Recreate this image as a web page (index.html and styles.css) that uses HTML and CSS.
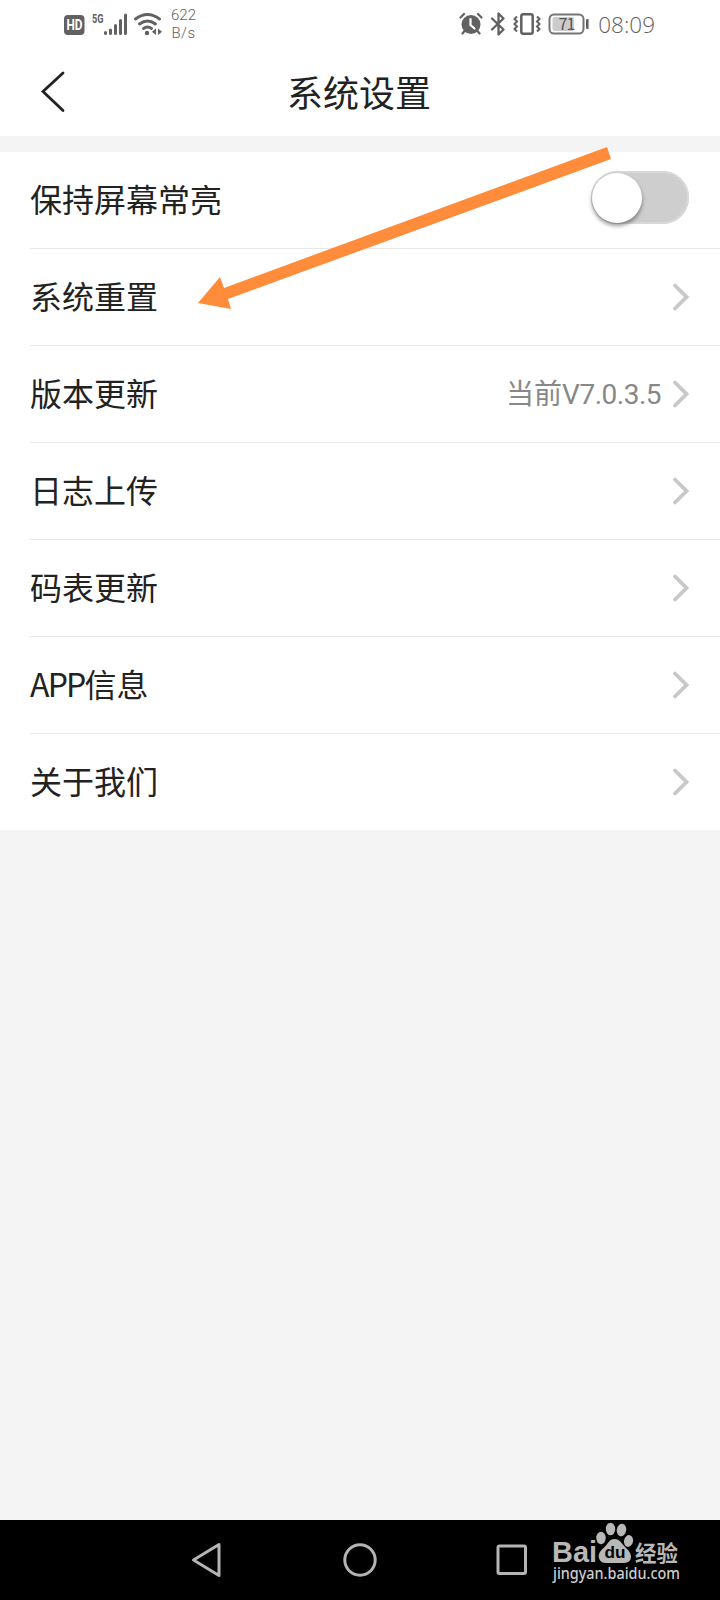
FILE: index.html
```
<!DOCTYPE html>
<html lang="zh-CN">
<head>
    <meta charset="UTF-8">
    <meta name="viewport" content="width=device-width, initial-scale=1.0">
    <title>系统设置</title>
    <link rel="stylesheet" href="styles.css">
</head>
<body>

<!-- Status bar -->
<div class="status-bar">
    <div class="status-left">
        <svg class="status-network" width="100" height="26" viewBox="0 0 100 26">
            <rect x="0" y="4" width="20.5" height="20" rx="4" fill="#616161"/>
            <text class="hd" x="2.5" y="19" textLength="16" lengthAdjust="spacingAndGlyphs">HD</text>
            <text class="net" x="28" y="11.5" textLength="11.5" lengthAdjust="spacingAndGlyphs">5G</text>
            <path d="M41.500 21.500V22.500M46.500 19V22.500M51.500 14.500V22.500M56.500 9.500V22.500M61.500 4V22.500" stroke="#616161" stroke-width="3" stroke-linecap="round"/>
            <g fill="none" stroke="#616161" stroke-width="2.900" stroke-linecap="round">
                <path d="M71.500 8Q83.500 -1 95.500 8"/>
                <path d="M75.500 13Q83.500 7 91.500 13"/>
                <path d="M79.500 17.500Q83.500 14.500 87.500 17.500"/>
            </g>
            <circle cx="83" cy="22" r="2.200" fill="#616161"/>
            <path d="M92 17.500V24L88 20.800ZM94 17.500V24L98 20.800Z" fill="#616161"/>
        </svg>
        <div class="speed">
            <span>622</span>
            <span class="unit">B/s</span>
        </div>
    </div>
    <div class="status-right">
        <!-- alarm -->
        <svg width="24" height="24" viewBox="0 0 24 24">
            <circle cx="12" cy="12.500" r="9.500" fill="#616161"/>
            <path d="M1.500 5.500L5 2M19 2L22.500 5.500M5.500 19L3.500 21.500M18.500 19L20.500 21.500" stroke="#616161" stroke-width="2.200" stroke-linecap="round"/>
            <path d="M11.500 7V13L15.500 16.500" fill="none" stroke="#fff" stroke-width="2.200" stroke-linecap="round"/>
        </svg>
        <!-- bluetooth -->
        <svg width="16" height="24" viewBox="0 0 16 24">
            <path d="M2 6.500L13.500 17.500L8.500 22.500V1.500L13.500 6.500L2 17.500" fill="none" stroke="#616161" stroke-width="2.300" stroke-linejoin="round" stroke-linecap="round"/>
        </svg>
        <!-- vibrate -->
        <svg width="28" height="24" viewBox="0 0 28 24">
            <rect x="8.300" y="2.300" width="11.400" height="19.500" rx="2" fill="none" stroke="#616161" stroke-width="2.500"/>
            <path d="M4 4.500L1.500 7L4 9.500L1.500 12L4 14.500L1.500 17L4 19.500M24 4.500L26.500 7L24 9.500L26.500 12L24 14.500L26.500 17L24 19.500" fill="none" stroke="#616161" stroke-width="2"/>
        </svg>
        <!-- battery -->
        <svg width="42" height="24" viewBox="0 0 42 24">
            <rect x="1.500" y="2.500" width="34" height="19" rx="4.500" fill="none" stroke="#757575" stroke-width="2"/>
            <rect x="4.500" y="5" width="21.500" height="14" rx="2" fill="#ccc"/>
            <rect x="38" y="7" width="2.600" height="10" rx="1" fill="#616161"/>
            <text class="charge" x="10.500" y="17.700" textLength="17">71</text>
        </svg>
        <span class="time">08:09</span>
    </div>
</div>

<!-- Header -->
<header>
    <svg class="back" width="26" height="42" viewBox="0 0 26 42">
        <path d="M23 2L3 20.500L23 39.500" fill="none" stroke="#222" stroke-width="2.800" stroke-linecap="round"/>
    </svg>
    <h1>系统设置</h1>
</header>

<!-- Settings list -->
<ul class="settings">
    <li>
        <span class="label">保持屏幕常亮</span>
        <span class="switch"><span class="knob"></span></span>
    </li>
    <li>
        <span class="label">系统重置</span>
        <svg class="chevron" viewBox="0 0 16 28"><path d="M2 2.500L13.500 14L2 25.500"/></svg>
    </li>
    <li>
        <span class="label">版本更新</span>
        <span class="value">当前<span class="version">V7.0.3.5</span></span>
        <svg class="chevron" viewBox="0 0 16 28"><path d="M2 2.500L13.500 14L2 25.500"/></svg>
    </li>
    <li>
        <span class="label">日志上传</span>
        <svg class="chevron" viewBox="0 0 16 28"><path d="M2 2.500L13.500 14L2 25.500"/></svg>
    </li>
    <li>
        <span class="label">码表更新</span>
        <svg class="chevron" viewBox="0 0 16 28"><path d="M2 2.500L13.500 14L2 25.500"/></svg>
    </li>
    <li>
        <span class="label"><span class="latin">APP</span>信息</span>
        <svg class="chevron" viewBox="0 0 16 28"><path d="M2 2.500L13.500 14L2 25.500"/></svg>
    </li>
    <li>
        <span class="label">关于我们</span>
        <svg class="chevron" viewBox="0 0 16 28"><path d="M2 2.500L13.500 14L2 25.500"/></svg>
    </li>
</ul>

<!-- Pointer arrow over the list -->
<svg class="arrow" width="414" height="166" viewBox="0 0 414 166">
    <path d="M0 158L22 132L26 143L409 2L413 14L30 154L33 164Z" fill="#ff8c3a"/>
</svg>

<!-- System navigation -->
<nav>
    <svg width="36" height="36" viewBox="0 0 36 36">
        <path d="M29 2.500V33.500L3.500 18Z"/>
    </svg>
    <svg width="36" height="36" viewBox="0 0 36 36">
        <circle cx="18" cy="18" r="15.200"/>
    </svg>
    <svg width="36" height="36" viewBox="0 0 36 36">
        <rect x="4" y="4" width="27.500" height="27.500" rx="1.500"/>
    </svg>
</nav>

<!-- Watermark -->
<svg class="watermark" width="132" height="68" viewBox="0 0 132 68">
    <text class="bai" x="1" y="40" textLength="45" lengthAdjust="spacingAndGlyphs">Bai</text>
    <ellipse cx="50" cy="16" rx="4.700" ry="6.200"/>
    <ellipse cx="59.500" cy="7" rx="4.700" ry="6.300"/>
    <ellipse cx="70.500" cy="8" rx="4.700" ry="6.300" transform="rotate(10 70.500 8)"/>
    <ellipse cx="77.500" cy="19" rx="4.500" ry="6" transform="rotate(12 77.500 19)"/>
    <path d="M63.500 17C69 17 71 22 75 26C79 30 81 33 79.500 37.500C77.500 42 71 41 63.500 41C56 41 50.500 42 48.500 37.500C46.500 33 48.500 29.500 52.500 26C57 22 58 17 63.500 17Z"/>
    <text class="du" x="53.500" y="35.500" textLength="21" lengthAdjust="spacingAndGlyphs">du</text>
    <text class="jingyan" x="84" y="39" textLength="43" lengthAdjust="spacingAndGlyphs">经验</text>
    <text class="site" x="2" y="57" textLength="127" lengthAdjust="spacingAndGlyphs">jingyan.baidu.com</text>
</svg>

</body>
</html>
```
FILE: styles.css
```
/* Global Styles */
* {
    margin: 0;
    padding: 0;
    box-sizing: border-box;
}

body {
    position: relative;
    display: flex;
    flex-direction: column;
    height: 1600px;
    font-family: 'Noto Sans CJK SC', sans-serif;
    background-color: #f4f4f4;
    color: #222;
}

svg {
    display: block;
    flex-shrink: 0;
}

/* Status bar */
.status-bar {
    display: flex;
    justify-content: space-between;
    height: 48px;
    padding: 0 65px 0 64px;
    background-color: #fff;
    color: #616161;
}

.status-left {
    display: flex;
    gap: 7px;
}

.status-network {
    margin-top: 11px;
}

.status-network text {
    font-family: Roboto, sans-serif;
    font-weight: bold;
}

.hd {
    font-size: 14px;
    fill: #fff;
}

.net {
    font-size: 13px;
    fill: #616161;
}

.speed {
    display: flex;
    flex-direction: column;
    align-items: center;
    padding-top: 6px;
    font-family: Roboto, sans-serif;
    font-size: 15px;
    font-weight: 300;
    line-height: 18px;
    color: #616161;
}

.unit {
    letter-spacing: 0.400px;
}

.status-right {
    display: flex;
    align-items: center;
    gap: 7px;
}

.charge {
    font-family: 'Noto Sans CJK SC', sans-serif;
    font-size: 16px;
    fill: #555;
}

.time {
    margin-left: 1px;
    font-family: 'Open Sans', sans-serif;
    font-size: 22.500px;
    font-weight: 300;
}

/* Header */
header {
    display: grid;
    grid-template-columns: 60px 1fr 60px;
    align-items: center;
    height: 88px;
    padding: 0 41px 0 39px;
    background-color: #fff;
}

.back {
    margin-left: 1px;
}

header h1 {
    padding-bottom: 2px;
    font-size: 36px;
    font-weight: 400;
    line-height: 86px;
    text-align: center;
}

/* Settings list */
.settings {
    margin-top: 16px;
    padding-left: 30px;
    list-style: none;
    background-color: #fff;
}

.settings li {
    display: flex;
    align-items: center;
    height: 97px;
    padding-right: 31px;
    border-bottom: 1px solid #e8e8e8;
}

.settings li:last-child {
    height: 96px;
    border-bottom: none;
}

.label {
    flex: 1;
    padding-bottom: 4px;
    font-size: 32px;
    line-height: 48px;
}

.latin {
    letter-spacing: -1.800px;
}

.value {
    margin-right: 12px;
    padding-bottom: 1px;
    font-size: 28px;
    line-height: 40px;
    color: #888;
}

.version {
    font-family: Roboto, sans-serif;
    letter-spacing: -0.500px;
}

.chevron {
    width: 16px;
    height: 28px;
    fill: none;
    stroke: #c8c8c8;
    stroke-width: 3.800px;
    stroke-linecap: round;
}

.switch {
    width: 98px;
    height: 53px;
    margin-bottom: 5px;
    padding: 2px 1px;
    border-radius: 27px;
    background-color: #cecece;
    box-shadow: inset 0 0 0 2px #d8d8d8;
}

.knob {
    display: block;
    width: 50px;
    height: 50px;
    border-radius: 50%;
    background-color: #fff;
    box-shadow: 0 3px 4px rgba(0, 0, 0, 0.4);
}

.arrow {
    position: absolute;
    left: 198px;
    top: 145px;
}

/* System navigation */
nav {
    display: flex;
    justify-content: center;
    align-items: center;
    gap: 116px;
    height: 80px;
    margin-top: auto;
    background-color: #000;
}

nav svg {
    fill: none;
    stroke: #b4b4b4;
    stroke-width: 3px;
    stroke-linejoin: round;
}

/* Watermark */
.watermark {
    position: absolute;
    left: 551px;
    top: 1522px;
    fill: #b8b8b8;
}

.bai {
    font-family: 'Liberation Sans', sans-serif;
    font-size: 29px;
    font-weight: bold;
}

.du {
    font-family: 'Liberation Sans', sans-serif;
    font-size: 17px;
    font-weight: bold;
    fill: #000;
}

.jingyan {
    font-size: 22px;
    font-weight: bold;
}

.site {
    font-family: 'Noto Sans', sans-serif;
    font-size: 16px;
    font-weight: 500;
    fill: #ccc;
}
```
